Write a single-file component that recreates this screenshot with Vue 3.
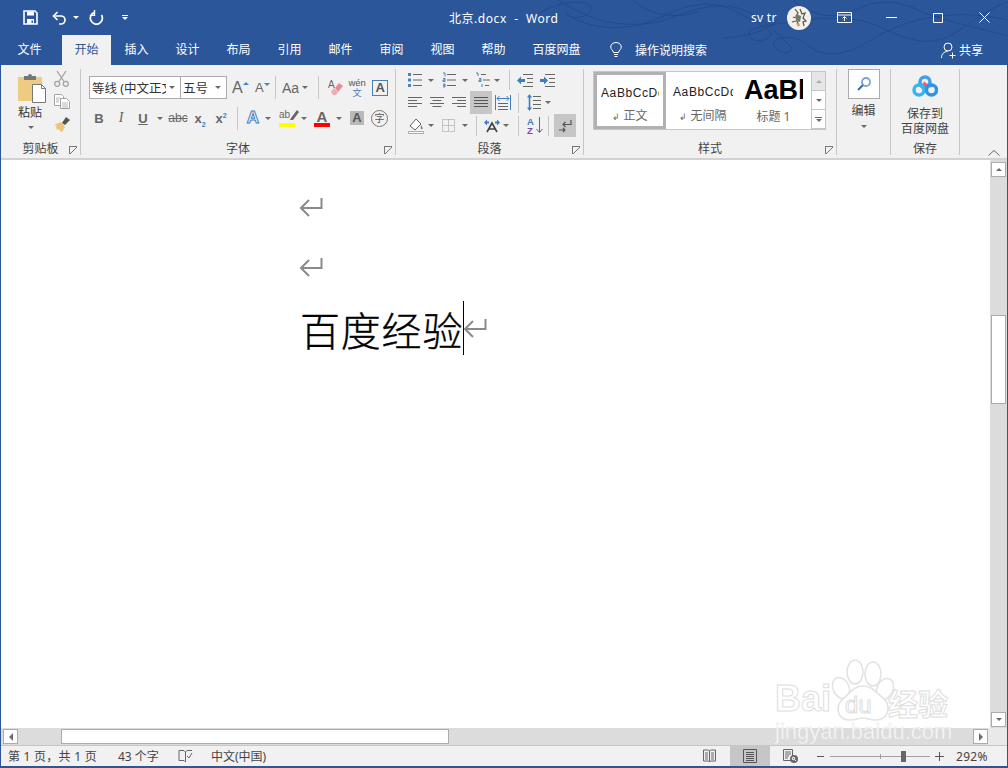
<template>
  <div class="app">
    <!-- 标题栏 -->
    <header class="titlebar">
      <svg class="swirls" width="470" height="65" viewBox="0 0 470 65" fill="none">
        <path d="M0 14C20 2 40 0 50 4C62 10 40 24 28 14M28 14C60 34 100 30 130 14C150 4 175 0 195 10C225 26 245 34 225 40C210 44 205 30 222 27C260 20 310 12 340 26C370 40 392 50 422 30C440 18 455 6 470 2" />
        <path d="M20 0C50 18 70 26 105 24C135 22 150 6 185 6C215 6 235 30 250 44C262 54 240 56 236 46C232 36 258 34 268 44C280 56 305 58 330 42C360 22 410 6 470 20" />
        <path d="M95 0C110 14 135 20 160 12M255 0C275 18 300 20 322 8C338 0 360 0 380 10C400 20 435 26 470 36M185 38C215 36 228 30 240 20" />
      </svg>
      <div class="qat">
        <svg class="save" width="15" height="15" viewBox="0 0 15 15"><path d="M1 1h11l2 2v11H1z" fill="none" stroke="#fff" stroke-width="1.6"/><path d="M4 1.5h7v4H4zM4 9h7v5H4z" fill="#fff"/><path d="M8.500 10.500h1.400v2.500H8.500z" fill="#2b579a"/></svg>
        <svg class="undo" width="15" height="14" viewBox="0 0 15 14" fill="none" stroke="#fff" stroke-width="1.7"><path d="M5.5 1L1.5 5l4 4"/><path d="M2 5h7a4 4 0 0 1 4 4v0a4 4 0 0 1-4 4H7"/></svg>
        <i class="caret white undo-caret"></i>
        <svg class="redo" width="15" height="15" viewBox="0 0 15 15" fill="none" stroke="#fff" stroke-width="1.7"><path d="M5 2.600A6 6 0 1 0 12.500 5"/><path d="M5.500 0v5.400H.8" stroke-width="1.4"/></svg>
        <span class="qat-more"><b></b><i class="caret white"></i></span>
      </div>
      <div class="doc-title">北京.docx&nbsp;&nbsp;-&nbsp;&nbsp;Word</div>
      <div class="user">sv tr</div>
      <svg class="avatar" width="24" height="24" viewBox="0 0 24 24">
        <circle cx="12" cy="12" r="12" fill="#f2f0ea"/>
        <path d="M8 3l3 4-2 3 4 1-3 4 2 5M13 3l2 5 3-1-2 5 3 3-3 1 1 4M6 11l3 1M5 16l4-1" fill="none" stroke="#55534c" stroke-width="1.2"/>
        <path d="M9 8l5 2-1 6-4-1z" fill="#77756c"/>
        <path d="M9 17l4 1-2 3z" fill="#c7a86a"/>
      </svg>
      <svg class="win-display" width="15" height="11" viewBox="0 0 15 11" fill="none" stroke="#fff"><path d="M.5.5h14v10H.5zM.5 3h14"/><path d="M7.500 9V5M5.500 6.500l2-2 2 2"/></svg>
      <svg class="win-min" width="11" height="1" viewBox="0 0 11 1"><path d="M0 .5h11" stroke="#fff"/></svg>
      <svg class="win-max" width="10" height="10" viewBox="0 0 10 10"><path d="M.5.5h9v9h-9z" fill="none" stroke="#fff"/></svg>
      <svg class="win-close" width="11" height="11" viewBox="0 0 11 11"><path d="M.5.5l10 10M10.500.5l-10 10" stroke="#fff"/></svg>
    </header>

    <!-- 选项卡 -->
    <nav class="tabs">
      <span class="tab first">文件</span>
      <span class="tab active">开始</span>
      <span v-for="t in tabs" :key="t" class="tab">{{ t }}</span>
      <span class="tab wide">百度网盘</span>
      <svg class="lamp" width="12" height="16" viewBox="0 0 12 16" fill="none" stroke="#fff"><path d="M3.500 10.500C3 8 .7 7.500 .7 5a5.300 4.500 0 0 1 10.600 0c0 2.500-2.300 3-2.800 5.500z"/><path d="M4 12.500h4M4.500 14.500h3"/></svg>
      <span class="tell">操作说明搜索</span>
      <span class="share">
        <svg width="15" height="17" viewBox="0 0 15 17" fill="none" stroke="#fff"><circle cx="7" cy="5" r="4"/><path d="M.5 16c0-4 2.500-6.500 6-6.500M11.500 10.500v6M8.500 13.500h6"/></svg>
        共享
      </span>
    </nav>

    <!-- 功能区 -->
    <section class="ribbon">
      <div class="group g-clip">
        <div class="body clip-body">
          <div class="paste">
            <svg width="28" height="30" viewBox="0 0 28 30">
              <path d="M0 4h24v24H0z" fill="#eecb82"/>
              <path d="M6 3h4a2 2 0 0 1 4 0h4v4H6z" fill="#777"/>
              <path d="M14.500 11.500h9l4 4v14h-13z" fill="#fff" stroke="#777"/>
              <path d="M23.500 11.500v4h4" fill="none" stroke="#777"/>
            </svg>
            <span class="paste-label">粘贴</span>
            <i class="caret"></i>
          </div>
          <div class="clip-tools">
            <svg width="15" height="16" viewBox="0 0 15 16" fill="none" stroke="#a3a3a3" stroke-width="1.3"><path d="M3 0l7 10.500M12 0L5 10.500"/><circle cx="3.200" cy="12.800" r="2.500"/><circle cx="11.800" cy="12.800" r="2.500"/></svg>
            <svg width="16" height="15" viewBox="0 0 16 15" fill="#fff" stroke="#a3a3a3"><path d="M.5.500h7l2 2v9h-9z"/><path d="M6.500 4.500h6l3 3v7h-9z"/><path d="M8 9h6M8 11h6M8 13h6M2 4h4M2 6h3M2 8h3" stroke-width=".8"/></svg>
            <svg width="16" height="16" viewBox="0 0 16 16"><path d="M8 7l4-6 4 3-5 5z" fill="#555"/><path d="M0 9l7-3 4 5-3 5-2-1-1-2-2 1-1-3 1-1z" fill="#eec27a"/></svg>
          </div>
        </div>
        <div class="label">剪贴板</div>
        <i class="launcher"></i>
      </div>

      <div class="group g-font">
        <div class="body">
          <div class="row font-r1">
            <div class="combo font-name"><span>等线 (中文正文)</span><i class="caret"></i></div>
            <div class="combo font-size"><span>五号</span><i class="caret"></i></div>
            <span class="grow-a big ml-5">A<i class="tri up"></i></span>
            <span class="grow-a small ml-7">A<i class="tri down"></i></span>
            <i class="sep ml-4"></i>
            <span class="case ml-6">Aa</span><i class="caret ml-3"></i>
            <i class="sep ml-10"></i>
            <svg class="ml-9" width="15" height="17" viewBox="0 0 15 17"><path d="M7 9l4-5 4 3-5 6z" fill="#ea8a98"/><path d="M3 13l3-4 4 4-2 3H5z" fill="#f2aab4"/><text x="0" y="9" font-size="10" fill="#666" font-family="Liberation Sans">A</text></svg>
            <span class="wen ml-6"><span>wén</span><b>文</b></span>
            <span class="boxed-a ml-7">A</span>
          </div>
          <div class="row font-r2">
            <span class="fmt w20 bold">B</span>
            <span class="fmt w24 ital">I</span>
            <span class="fmt w20 under">U</span>
            <i class="caret ml-4"></i>
            <span class="fmt w22 strike ml-4">abc</span>
            <span class="fmt w22 bold">x<sub>2</sub></span>
            <span class="fmt w20 bold">x<sup>2</sup></span>
            <i class="sep ml-6"></i>
            <span class="effect-a ml-6">A</span><i class="caret ml-3"></i>
            <span class="mark-ab ml-8"><span>ab</span><svg width="9" height="11" viewBox="0 0 9 11"><path d="M1 8l6-8 2 2-6 8H0z" fill="#666"/></svg><b></b></span><i class="caret ml-6"></i>
            <span class="color-a ml-7">A<b></b></span><i class="caret ml-6"></i>
            <span class="shade-a ml-8">A</span>
            <span class="circle-z ml-7">字</span>
          </div>
        </div>
        <div class="label">字体</div>
        <i class="launcher"></i>
      </div>

      <div class="group g-para">
        <div class="body">
          <div class="row para-r1">
            <svg width="14" height="16" viewBox="0 0 14 16"><path d="M5 2.500h9M5 8h9M5 13.500h9" stroke="#666"/><path d="M0 1h3v3H0zM0 6.500h3v3H0zM0 12h3v3H0z" fill="#4c82bf"/></svg>
            <i class="caret ml-6"></i>
            <svg class="ml-8" width="14" height="16" viewBox="0 0 14 16"><path d="M5 2.500h9M5 8h9M5 13.500h9" stroke="#666"/><path d="M1 1h2v3.500M1 6.500h2v3H1v-1.500h2M1 12h2v3H1M1 13.500h2" fill="none" stroke="#4c82bf"/></svg>
            <i class="caret ml-6"></i>
            <svg class="ml-7" width="16" height="16" viewBox="0 0 16 16"><path d="M6 2.500h5M8 8h7M10 13.500h4" stroke="#666"/><path d="M1 1h2v3M4 6.500h2v3H4v-1.500h2M7 12v3" fill="none" stroke="#4c82bf"/></svg>
            <i class="caret ml-3"></i>
            <i class="sep ml-9 tall"></i>
            <svg class="ml-7" width="16" height="15" viewBox="0 0 16 15"><path d="M6 1.500h10M10 5.500h6M10 9.500h6M6 13.500h10" stroke="#666"/><path d="M0 7.500l4-4v2.500h4v3H4v2.500z" fill="#3f7dc2"/></svg>
            <svg class="ml-6" width="16" height="15" viewBox="0 0 16 15"><path d="M6 1.500h10M10 5.500h6M10 9.500h6M6 13.500h10" stroke="#666"/><path d="M9 7.500l-4-4v2.500H1v3h4v2.500z" fill="#3f7dc2"/></svg>
          </div>
          <div class="row para-r2">
            <svg width="14" height="11" viewBox="0 0 14 11"><path d="M0 .5h14M0 3.500h9M0 6.500h14M0 9.500h9" stroke="#666"/></svg>
            <svg class="ml-8" width="14" height="11" viewBox="0 0 14 11"><path d="M0 .5h14M2.500 3.500h9M0 6.500h14M2.500 9.500h9" stroke="#666"/></svg>
            <svg class="ml-8" width="14" height="11" viewBox="0 0 14 11"><path d="M0 .5h14M5 3.500h9M0 6.500h14M5 9.500h9" stroke="#666"/></svg>
            <span class="hl ml-4"><svg width="14" height="11" viewBox="0 0 14 11"><path d="M0 .5h14M0 3.500h14M0 6.500h14M0 9.500h14" stroke="#555"/></svg></span>
            <svg class="ml-3" width="16" height="15" viewBox="0 0 16 15"><path d="M.5 0v15M15.500 0v15" stroke="#3f7dc2"/><path d="M3 14.500h10M3 11.500h10M3 8.500h10" stroke="#666"/><path d="M2 3.500h12M2 3.500l2.500-2.500M2 3.500L4.500 6M14 3.500L11.500 1M14 3.500L11.500 6" stroke="#3f7dc2" fill="none"/></svg>
            <i class="sep ml-7 tall"></i>
            <svg class="ml-8" width="14" height="17" viewBox="0 0 14 17"><path d="M6 2.500h8M6 6.500h8M6 10.500h8M6 14.500h8" stroke="#666"/><path d="M2.500 0L5 3.500H3.300v10H5L2.500 17 0 13.500h1.700v-10H0z" fill="#3f7dc2"/></svg>
            <i class="caret ml-4"></i>
          </div>
          <div class="row para-r3">
            <svg width="16" height="16" viewBox="0 0 16 16"><path d="M2 8l6-7 5 5-6 6z" fill="#fff" stroke="#666"/><path d="M13 7c1 2 2 3 1.500 4s-2.500 0-1.500-4z" fill="#3f7dc2"/><path d="M.5 13.500h15v2H.5z" fill="#fff" stroke="#999" stroke-width=".8"/></svg>
            <i class="caret ml-4"></i>
            <svg class="ml-8" width="13" height="13" viewBox="0 0 13 13" fill="none" stroke="#999" stroke-dasharray="1 1"><path d="M.5.500h12v12H.5zM6.500.500v12M.5 6.500h12"/></svg>
            <i class="caret ml-7"></i>
            <i class="sep ml-8 tall"></i>
            <svg class="ml-7" width="16" height="14" viewBox="0 0 16 14"><path d="M3 13L8 4l5 9M5 10h6" fill="none" stroke="#444" stroke-width="1.6"/><path d="M0 3.500l3-3v2h2v2H3v2zM16 3.500l-3-3v2h-2v2h2v2z" fill="#3f7dc2"/></svg>
            <i class="caret ml-3"></i>
            <i class="sep ml-9 tall"></i>
            <span class="sort ml-8"><span class="az"><b>A</b><b class="z">Z</b></span><svg width="7" height="16" viewBox="0 0 7 16" fill="none" stroke="#666"><path d="M3.500 0v15M.5 12l3 3.500 3-3.500"/></svg></span>
            <i class="sep ml-5 tall"></i>
            <span class="hl ml-5"><svg width="14" height="14" viewBox="0 0 14 14" fill="none" stroke="#555"><path d="M13 1v4.500H5M7.500 3L5 5.500 7.500 8" stroke-width="1.2"/><path d="M1 11h6M5 9l2 2-2 2" stroke-width="1.2"/></svg></span>
          </div>
        </div>
        <div class="label">段落</div>
        <i class="launcher"></i>
      </div>

      <div class="group g-style">
        <div class="body">
          <div class="gallery">
            <div class="style-item selected">
              <div class="sample">AaBbCcDd</div>
              <div class="style-name"><em>↲</em> 正文</div>
            </div>
            <div class="style-item">
              <div class="sample">AaBbCcDd</div>
              <div class="style-name"><em>↲</em> 无间隔</div>
            </div>
            <div class="style-item heading">
              <div class="sample">AaBbC</div>
              <div class="style-name">标题 1</div>
            </div>
            <div class="gallery-btns">
              <span class="disabled"><i class="tri up gray"></i></span>
              <span><i class="caret"></i></span>
              <span class="more"><b></b><i class="caret"></i></span>
            </div>
          </div>
        </div>
        <div class="label">样式</div>
        <i class="launcher"></i>
      </div>

      <div class="group g-edit">
        <div class="body">
          <div class="edit-btn">
            <svg width="16" height="16" viewBox="0 0 16 16" fill="none"><circle cx="10" cy="6" r="4" stroke="#7aa4d2" stroke-width="1.8"/><path d="M7 9l-5 5" stroke="#3f6fa8" stroke-width="2.2"/></svg>
          </div>
          <span class="big-label">编辑</span>
          <i class="caret"></i>
        </div>
      </div>

      <div class="group g-save">
        <div class="body">
          <svg class="pan" width="26" height="23" viewBox="0 0 26 23" fill="none">
            <path d="M9 13l5-5" stroke="#ef5f6c" stroke-width="4"/>
            <circle cx="13" cy="7" r="5" stroke="#3fa0e8" stroke-width="3.5"/>
            <path d="M13 12c3-3 6-3 7 0" stroke="#ef5f6c" stroke-width="3.5"/>
            <circle cx="7" cy="15" r="5" stroke="#36b6ea" stroke-width="3.5"/>
            <circle cx="19.500" cy="15" r="5" stroke="#2f93e6" stroke-width="3.5"/>
          </svg>
          <span class="big-label two">保存到<br>百度网盘</span>
        </div>
        <div class="label">保存</div>
      </div>

      <svg class="collapse" width="12" height="6" viewBox="0 0 12 6"><path d="M.5 5.500L6 .5l5.500 5" fill="none" stroke="#666"/></svg>
    </section>

    <!-- 文档区 -->
    <main class="doc">
      <div class="page">
        <p class="line"><svg class="pilcrow" width="24" height="21" viewBox="0 0 24 21"><use href="#ret" /></svg></p>
        <p class="line"><svg class="pilcrow" width="24" height="21" viewBox="0 0 24 21"><use href="#ret" /></svg></p>
        <p class="line last">
          <span class="doc-text">百度经验</span>
          <i class="cursor"></i>
          <svg class="pilcrow" width="24" height="21" viewBox="0 0 24 21"><use href="#ret" /></svg>
        </p>
        <svg width="0" height="0" class="defs"><defs><g id="ret" fill="none" stroke="#8a8a8a" stroke-width="2"><path d="M22.500 1v10H2"/><path d="M10 3L2 11l8 8"/></g></defs></svg>
      </div>
      <div class="vscroll">
        <span class="sb-btn"><i class="tri up dark"></i></span>
        <span class="v-thumb"></span>
        <span class="sb-btn bottom"><i class="caret"></i></span>
      </div>
    </main>

    <div class="hscroll">
      <div class="h-track">
        <span class="sb-btn h"><i class="tri left"></i></span>
        <span class="h-thumb"></span>
        <span class="sb-btn h end"><i class="tri right"></i></span>
      </div>
    </div>

    <!-- 状态栏 -->
    <footer class="status">
      <span class="page-info">第 1 页，共 1 页</span>
      <span class="words">43 个字</span>
      <svg class="proof" width="15" height="13" viewBox="0 0 15 13" fill="none" stroke="#666"><path d="M1 .5h5l1.500 1.500L9 .5h5M1 .5v10h5l1.500 1.500M7.500 2v10"/><path d="M9 6l2 2 3-5"/></svg>
      <span class="lang">中文(中国)</span>
      <svg class="view-read" width="13" height="14" viewBox="0 0 13 14" fill="none" stroke="#666"><path d="M.5 1h5l1 1 1-1h5v11h-5l-1 1-1-1h-5zM6.500 2v11M2 4h3M2 6h3M2 8h3M2 10h3M8 4h3M8 6h3M8 8h3M8 10h3"/></svg>
      <span class="view-print"><svg width="14" height="14" viewBox="0 0 14 14" fill="none" stroke="#555"><path d="M.5.500h13v13H.5zM3 3.500h8M3 5.500h8M3 7.500h8M3 9.500h8M3 11.500h8"/></svg></span>
      <svg class="view-web" width="15" height="14" viewBox="0 0 15 14"><path d="M.5.500h9v11h-9zM2 3h6M2 5h6M2 7h4M2 9h3" fill="none" stroke="#666"/><circle cx="11" cy="10" r="4" fill="#666"/><path d="M9 9l2-1 1 2-2 1zM12 12l1-1" stroke="#fff" fill="none"/></svg>
      <span class="zoom-minus"></span>
      <div class="slider"><i class="tick"></i><i class="knob"></i></div>
      <span class="zoom-plus"></span>
      <span class="zoom-val">292%</span>
    </footer>

    <!-- 水印 -->
    <div class="watermark">
      <svg class="paw" width="72" height="80" viewBox="0 0 72 80" fill="#fff" stroke="#e3e3e3" stroke-width="1.6">
        <ellipse cx="27" cy="14" rx="8" ry="12"/>
        <ellipse cx="45" cy="16" rx="8" ry="12"/>
        <ellipse cx="13" cy="30" rx="8" ry="11" transform="rotate(-25 13 30)"/>
        <ellipse cx="57" cy="31" rx="8" ry="11" transform="rotate(25 57 31)"/>
        <path d="M35 28c9 0 13 6 20 12 8 7 7 22-8 22-5 0-8-2-12-2s-8 2-13 2C8 62 7 47 16 40c7-6 10-12 19-12z"/>
      </svg>
      <span class="wm-bai">Bai</span>
      <span class="wm-du">du</span>
      <span class="wm-jy">经验</span>
      <span class="wm-url">jingyan.baidu.com</span>
    </div>
  </div>
</template>

<script setup>
const tabs = ['插入', '设计', '布局', '引用', '邮件', '审阅', '视图', '帮助']
</script>

<style>
html, body { margin: 0; background: #fff; }
</style>

<style scoped>
* { box-sizing: border-box; }
.app {
  width: 1008px;
  height: 768px;
  display: flex;
  flex-direction: column;
  position: relative;
  overflow: hidden;
  background: #2b579a;
  border: solid #2b579a;
  border-width: 0 1px 2px;
  font-family: "Noto Sans", "Noto Sans CJK SC", sans-serif;
  font-size: 12px;
  color: #444;
}
svg { flex: none; display: block; }
i { display: block; flex: none; }

/* 标题栏 */
.titlebar {
  height: 35px;
  flex: none;
  display: flex;
  align-items: center;
  position: relative;
  color: #fff;
}
.swirls { position: absolute; left: 537px; top: 0; }
.swirls path { stroke: #234b88; stroke-width: 1; }
.qat { display: flex; align-items: center; padding-left: 22px; width: 448px; position: relative; }
.undo { margin-left: 14px; }
.undo-caret { margin-left: 6px; }
.redo { margin-left: 10px; }
.qat-more { margin-left: 18px; display: flex; flex-direction: column; gap: 1px; align-items: center; }
.qat-more b { display: block; width: 6px; height: 1px; background: #fff; }
.doc-title { position: relative; width: 302px; font-size: 12px; letter-spacing: .55px; white-space: nowrap; }
.user { position: relative; width: 36px; font-size: 12px; letter-spacing: .3px; }
.avatar { position: relative; }
.win-display { margin-left: 26px; position: relative; }
.win-min { margin-left: 34px; position: relative; }
.win-max { margin-left: 36px; position: relative; }
.win-close { margin-left: 36px; position: relative; }

/* 选项卡 */
.tabs {
  height: 30px;
  flex: none;
  display: flex;
  align-items: center;
  padding-left: 3px;
  color: #fff;
  position: relative;
}
.tab { width: 51px; height: 30px; line-height: 29px; text-align: center; flex: none; }
.tab.first { margin-right: 7px; }
.tab.active { width: 49px; background: #f1f1f1; color: #2b579a; }
.tab.wide { width: 75px; }
.lamp { margin-left: 16px; }
.tell { margin-left: 13px; }
.share { margin-left: auto; margin-right: 24px; display: flex; align-items: center; gap: 3px; }

/* 功能区 */
.ribbon {
  height: 95px;
  flex: none;
  display: flex;
  position: relative;
  background: #f1f1f1;
  border-bottom: 2px solid #d2d2d2;
  padding-top: 4px;
}
.group {
  position: relative;
  height: 86px;
  flex: none;
  display: flex;
  flex-direction: column;
  border-right: 1px solid #c6c6c6;
}
.g-clip { width: 80px; }
.g-font { width: 315px; }
.g-para { width: 188px; }
.g-style { width: 253px; }
.g-edit { width: 54px; }
.g-save { width: 69px; }
.body { height: 72px; flex: none; }
.label { height: 14px; line-height: 15px; text-align: center; color: #444; }
.launcher {
  position: absolute;
  right: 3px;
  bottom: 1px;
  width: 8px;
  height: 8px;
  border: solid #777;
  border-width: 1px 0 0 1px;
  background: linear-gradient(135deg, transparent 44%, #777 45%, #777 55%, transparent 56%);
}
.sep { width: 1px; height: 23px; background: #c6c6c6; }
.sep.tall { height: 20px; }
.caret {
  width: 0;
  height: 0;
  border: 3px solid transparent;
  border-top-color: #6a6a6a;
  border-bottom-width: 0;
}
.caret.white { border-top-color: #fff; }
.tri { width: 0; height: 0; border: 3px solid transparent; }
.tri.up { border-top-width: 0; border-bottom-color: #4c82bf; }
.tri.down { border-bottom-width: 0; border-top-color: #4c82bf; }
.tri.gray { border-bottom-color: #aaa; }
.tri.dark { border-bottom-color: #6a6a6a; }
.tri.left { border-right-color: #6a6a6a; border-width: 4px 4px 4px 0; }
.tri.right { border-left-color: #6a6a6a; border-width: 4px 0 4px 4px; }
.row { display: flex; align-items: center; }
.ml-3 { margin-left: 3px; }
.ml-4 { margin-left: 4px; }
.ml-5 { margin-left: 5px; }
.ml-6 { margin-left: 6px; }
.ml-7 { margin-left: 7px; }
.ml-8 { margin-left: 8px; }
.ml-9 { margin-left: 9px; }
.ml-10 { margin-left: 10px; }

/* 剪贴板 */
.clip-body { display: flex; padding: 4px 0 0 17px; }
.paste { width: 28px; display: flex; flex-direction: column; align-items: center; }
.paste-label { color: #333; line-height: 17px; margin: 1px 4px 0 0; white-space: nowrap; }
.paste .caret { margin: 5px 2px 0 0; }
.clip-tools { display: flex; flex-direction: column; gap: 7px; margin: -2px 0 0 8px; }

/* 字体 */
.g-font .body { padding: 7px 0 0 8px; }
.font-r1 { height: 23px; }
.font-r2 { height: 24px; margin-top: 7px; }
.combo {
  height: 23px;
  background: #fff;
  border: 1px solid #ababab;
  display: flex;
  align-items: center;
  padding-left: 2px;
  color: #333;
  font-size: 12.5px;
  overflow: hidden;
  white-space: nowrap;
}
.combo span { overflow: hidden; flex: 1; }
.combo .caret { margin: 0 5px 0 3px; }
.font-name { width: 92px; }
.font-size { width: 47px; margin-left: -1px; }
.grow-a { display: flex; color: #666; font-family: "Liberation Sans", sans-serif; }
.grow-a.big { font-size: 16px; width: 16px; }
.grow-a.small { font-size: 13px; width: 16px; }
.grow-a .tri { margin-top: 3px; }
.case { color: #666; font-size: 14px; font-family: "Liberation Sans", sans-serif; }
.wen { width: 16px; height: 20px; display: flex; flex-direction: column; align-items: center; font-size: 9.5px; line-height: 10px; color: #555; font-family: "Liberation Sans", sans-serif; }
.wen b { color: #3f7dc2; font: 9px/10px "Noto Sans CJK SC", sans-serif; }
.boxed-a {
  width: 16px;
  height: 16px;
  border: 1.5px solid #4a7fb5;
  text-align: center;
  font: bold 13px/13px "Liberation Sans", sans-serif;
  color: #555;
}
.fmt { display: block; text-align: center; color: #666; font-family: "Liberation Sans", sans-serif; font-size: 13px; flex: none; }
.w20 { width: 20px; }
.w22 { width: 22px; }
.w24 { width: 24px; }
.bold { font-weight: bold; }
.ital { font-style: italic; font-family: "Liberation Serif", serif; font-size: 14px; }
.under { font-weight: bold; text-decoration: underline; }
.strike { text-decoration: line-through; font-size: 12px; }
.fmt sub, .fmt sup { font-size: 7px; color: #3f7dc2; line-height: 0; }
.effect-a {
  width: 18px;
  text-align: center;
  font: bold 17px/18px "Liberation Sans", sans-serif;
  color: #fff;
  -webkit-text-stroke: 1px #3f7dc2;
}
.mark-ab { width: 16px; height: 17px; display: flex; position: relative; font: 10px/10px "Liberation Sans", sans-serif; color: #666; }
.mark-ab b { position: absolute; left: 0; bottom: 0; width: 16px; height: 4px; background: #ff0; }
.color-a { width: 16px; height: 17px; position: relative; text-align: center; font: bold 15px/14px "Liberation Sans", sans-serif; color: #666; }
.color-a b { position: absolute; left: 0; bottom: 0; width: 16px; height: 4px; background: #f00; }
.shade-a { width: 14px; height: 14px; background: #b9b9b9; text-align: center; font: bold 13px/14px "Liberation Sans", sans-serif; color: #555; }
.circle-z { width: 17px; height: 17px; border: 1px solid #777; border-radius: 50%; text-align: center; font-size: 10px; line-height: 15px; color: #555; }

/* 段落 */
.g-para .body { padding-left: 12px; }
.para-r1 { height: 22px; }
.para-r2, .para-r3 { height: 23px; }
.hl { width: 22px; height: 23px; background: #c6c6c6; display: flex; align-items: center; justify-content: center; flex: none; }
.sort { width: 16px; display: flex; }
.az { display: flex; flex-direction: column; font: bold 9.5px/9px "Liberation Sans", sans-serif; color: #3f7dc2; width: 9px; }
.az .z { color: #7a4aa8; }

/* 样式 */
.g-style .body { padding: 2px 0 0 9px; }
.gallery { width: 233px; height: 59px; background: #fff; border: 1px solid #c6c6c6; display: flex; position: relative; }
.style-item { width: 73px; height: 57px; flex: none; padding: 10px 6px 0 7px; overflow: hidden; }
.style-item.selected { width: 72px; border: 3px solid #b1b1b1; padding: 8px 4px 0 4px; }
.sample { height: 20px; line-height: 20px; font-size: 12px; letter-spacing: .6px; color: #222; font-family: "Liberation Sans", sans-serif; white-space: nowrap; overflow: hidden; }
.style-name { text-align: center; color: #666; line-height: 16px; margin-top: 6px; white-space: nowrap; }
.style-name em { font-style: normal; font-size: 9px; }
.style-item.selected .style-name { margin-top: 5px; }
.heading { width: 70px; padding: 3px 6px 0 5px; }
.heading .sample { height: 31px; line-height: 31px; font-size: 27px; letter-spacing: 0; font-weight: bold; color: #000; }
.heading .style-name { margin-top: 3px; }
.gallery-btns { position: absolute; right: 0; top: 0; width: 14px; display: flex; flex-direction: column; height: 57px; }
.gallery-btns span { height: 19px; border-left: 1px solid #c6c6c6; border-bottom: 1px solid #c6c6c6; display: flex; flex-direction: column; align-items: center; justify-content: center; gap: 1px; background: #fff; }
.gallery-btns .disabled { background: #e6e6e6; }
.gallery-btns .more b { display: block; width: 7px; height: 1px; background: #6a6a6a; }

/* 编辑 保存 */
.g-edit .body { display: flex; flex-direction: column; align-items: center; }
.edit-btn { width: 32px; height: 30px; background: #fff; border: 1px solid #ababab; display: flex; align-items: center; justify-content: center; }
.big-label { color: #444; line-height: 15px; margin-top: 4px; text-align: center; }
.g-edit .caret { margin-top: 7px; }
.g-save .body { display: flex; flex-direction: column; align-items: center; padding-top: 6px; }
.big-label.two { margin-top: 8px; }
.collapse { margin: 81px 0 0 28px; }

/* 文档 */
.doc { flex: 1; min-height: 0; display: flex; background: #fff; }
.page { flex: 1; padding: 17px 0 0 298px; position: relative; }
.line { margin: 0; height: 60px; display: flex; align-items: center; }
.doc-text { font: 300 40px/60px "Noto Sans CJK SC", sans-serif; letter-spacing: .8px; color: #000; position: relative; top: 2px; -webkit-text-stroke: .35px #000; margin-left: 1px; }
.cursor { width: 1px; height: 54px; background: #000; position: relative; top: 1px; }
.last .pilcrow { margin-left: -1px; position: relative; top: 1px; }
.defs { position: absolute; }
.vscroll { width: 17px; flex: none; background: #dcdcdc; display: flex; flex-direction: column; padding: 2px 1px 1px; }
.sb-btn { width: 15px; height: 15px; background: #fff; border: 1px solid #ababab; display: flex; align-items: center; justify-content: center; flex: none; }
.sb-btn.bottom { margin-top: auto; }
.v-thumb { height: 89px; margin-top: 138px; background: #fff; border: 1px solid #ababab; flex: none; }
.hscroll { height: 18px; flex: none; background: #e9e9e9; padding-right: 19px; border-bottom: 1px solid #c6c6c6; }
.h-track { height: 17px; background: #dcdcdc; display: flex; padding: 1px 0 1px 2px; }
.sb-btn.end { margin-left: auto; }
.h-thumb { width: 388px; margin-left: 43px; background: #fff; border: 1px solid #ababab; flex: none; }

/* 状态栏 */
.status { height: 20px; flex: none; background: #f1f1f1; display: flex; align-items: center; color: #444; font-size: 12px; padding-left: 7px; }
.page-info { width: 110px; white-space: nowrap; letter-spacing: .25px; }
.words { width: 60px; white-space: nowrap; }
.lang { margin-left: 18px; width: 56px; white-space: nowrap; }
.view-read { margin-left: 436px; }
.view-print { width: 40px; height: 20px; background: #c6c6c6; margin-left: 14px; display: flex; align-items: center; justify-content: center; flex: none; }
.view-web { margin-left: 13px; }
.zoom-minus { width: 7px; height: 1px; background: #555; margin-left: 19px; flex: none; }
.slider { width: 100px; height: 1px; background: #a0a0a0; margin-left: 6px; position: relative; flex: none; }
.tick { position: absolute; left: 50px; top: -2px; width: 1px; height: 5px; background: #a0a0a0; }
.knob { position: absolute; left: 71px; top: -5px; width: 5px; height: 11px; background: #666; }
.zoom-plus { width: 9px; height: 9px; margin-left: 5px; flex: none; background: linear-gradient(#555, #555) center / 9px 1px no-repeat, linear-gradient(#555, #555) center / 1px 9px no-repeat; }
.zoom-val { margin-left: 12px; white-space: nowrap; letter-spacing: .3px; }

/* 水印 */
.watermark { position: absolute; left: 774px; top: 655px; width: 190px; height: 95px; pointer-events: none; }
.paw { position: absolute; left: 53px; top: 3px; }
.wm-bai, .wm-du, .wm-jy { position: absolute; color: #fff; -webkit-text-stroke: 1px #dedede; }
.wm-bai { left: 0; top: 26px; font: bold 36px/1 "Liberation Sans", sans-serif; }
.wm-du { left: 70px; top: 38px; font: 24px/1 "Liberation Sans", sans-serif; }
.wm-jy { left: 113px; top: 32px; font: bold 30px/1 "Noto Sans CJK SC", sans-serif; }
.wm-url { position: absolute; left: 0; top: 66px; color: rgba(255, 255, 255, .78); font: 22px/1 "Liberation Sans", sans-serif; white-space: nowrap; -webkit-text-stroke: .5px rgba(220, 220, 220, .8); }
</style>
